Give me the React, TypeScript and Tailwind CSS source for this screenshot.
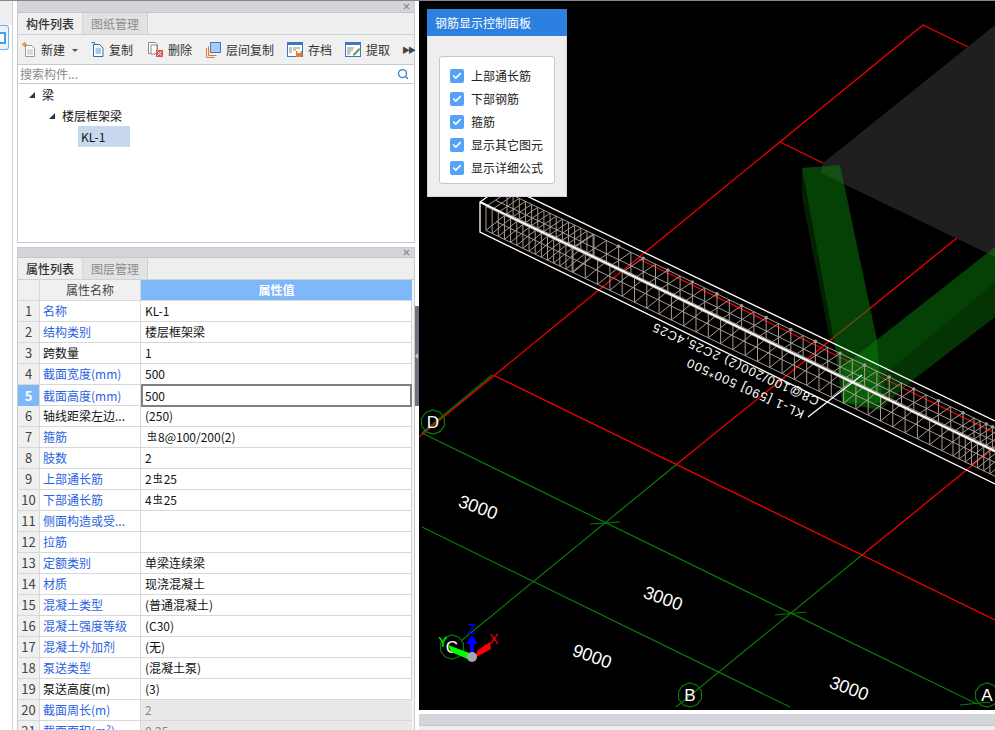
import React from "react";
import { Check, Search, X } from "lucide-react";

type Row = { name: string; value?: React.ReactNode; black?: boolean; grey?: boolean };

// small raised rebar-grade mark used in the rebar values
const Grade = () => <span className="text-[10px] relative top-[-2px] mx-[1px]">虫</span>;

const rows: Row[] = [
    { name: "名称", value: "KL-1" },
    { name: "结构类别", value: "楼层框架梁" },
    { name: "跨数量", value: "1", black: true },
    { name: "截面宽度(mm)", value: "500" },
    { name: "截面高度(mm)", value: "500" },
    { name: "轴线距梁左边...", value: "(250)", black: true },
    { name: "箍筋", value: <><span className="ml-[1px]" /><Grade />8@100/200(2)</> },
    { name: "肢数", value: "2" },
    { name: "上部通长筋", value: <>2<Grade />25</> },
    { name: "下部通长筋", value: <>4<Grade />25</> },
    { name: "侧面构造或受..." },
    { name: "拉筋" },
    { name: "定额类别", value: "单梁连续梁" },
    { name: "材质", value: "现浇混凝土" },
    { name: "混凝土类型", value: "(普通混凝土)" },
    { name: "混凝土强度等级", value: "(C30)" },
    { name: "混凝土外加剂", value: "(无)" },
    { name: "泵送类型", value: "(混凝土泵)" },
    { name: "泵送高度(m)", value: "(3)", black: true },
    { name: "截面周长(m)", value: "2", grey: true },
    { name: "截面面积(m²)", value: "0.25", grey: true },
];

const NewIcon = () => (
    <svg width="14" height="16" viewBox="0 0 14 16">
        <path d="M3.5 3.5h6l3 3v8h-9z" fill="#fff" stroke="#9a9a9a" />
        <path d="M5 8h6M5 10h6M5 12h6" stroke="#b5b5b5" />
        <path d="M2.5 0v5M0 2.5h5M.8.8l3.4 3.4M4.2.8L.8 4.2" stroke="#f0932b" strokeWidth="1" />
    </svg>
);
const CopyIcon = () => (
    <svg width="13" height="15" viewBox="0 0 13 15">
        <path d="M.5.5h3v2" fill="none" stroke="#2f6fb5" />
        <path d="M2.5 2.5h6l3.5 3.5v8.500h-9.500z" fill="#fff" stroke="#2f6fb5" />
        <path d="M4.500 7h5.500M4.500 9h5.500M4.500 11h5.500" stroke="#5a8fc8" />
    </svg>
);
const DeleteIcon = () => (
    <svg width="15" height="15" viewBox="0 0 15 15">
        <path d="M.5.5h7l2 2v9h-9z" fill="#fff" stroke="#8a8a8a" />
        <path d="M3 3h6v9h-6z" fill="#fff" stroke="#8a8a8a" />
        <rect x="8" y="8" width="7" height="7" fill="#d9534f" />
        <path d="M9.500 9.500l4 4M13.500 9.500l-4 4" stroke="#fff" />
    </svg>
);
const FloorCopyIcon = () => (
    <svg width="15" height="16" viewBox="0 0 15 16">
        <path d="M.5 6v9.500h8M2.500 4.500v9h8" fill="none" stroke="#e8742a" />
        <rect x="4.500" y=".5" width="10" height="10" fill="#a9cdf2" stroke="#2f7fd0" />
    </svg>
);
const SaveIcon = () => (
    <svg width="16" height="15" viewBox="0 0 16 15">
        <rect x=".5" y=".5" width="15" height="14" fill="#fff" stroke="#3b78bd" />
        <rect x="0" y="0" width="16" height="3" fill="#3b78bd" />
        <path d="M2 6h3M2 8h3M2 10h3M6 6h7M6 8h3" stroke="#8a8a8a" />
        <rect x="9" y="9" width="6" height="6" fill="#ec7a2c" />
        <rect x="10.500" y="9" width="3" height="2" fill="#fff" />
    </svg>
);
const ExtractIcon = () => (
    <svg width="16" height="15" viewBox="0 0 16 15">
        <rect x=".5" y=".5" width="15" height="14" fill="#fff" stroke="#3b78bd" />
        <rect x="0" y="0" width="16" height="3" fill="#3b78bd" />
        <path d="M2 6h7M2 8h6M2 10h4M2 12h3" stroke="#8a8a8a" />
        <path d="M8 12l6-6 1.500 1.500-6 6H8z" fill="#6a9a5a" />
    </svg>
);

const tools = [
    { label: "复制", icon: <CopyIcon />, w: "w-[57px]" },
    { label: "删除", icon: <DeleteIcon />, w: "w-[58px]" },
    { label: "层间复制", icon: <FloorCopyIcon />, w: "w-[81px]" },
    { label: "存档", icon: <SaveIcon />, w: "w-[58px]" },
    { label: "提取", icon: <ExtractIcon />, w: "w-[58px]" },
];

const PanelTitle = () => (
    <div className="h-[11px] bg-[#d4d5da] border-b border-[#c4c6cc] flex items-center justify-end pr-[3px] box-content">
        <X className="w-[9px] h-[9px] text-[#8a8a8a]" strokeWidth={3} />
    </div>
);

const Tabs = ({ active, other }: { active: string; other: string }) => (
    <div className="h-[22px] flex bg-[#eeeeee] border-b border-[#cfd1d6] shrink-0 text-[12px]">
        <div className="w-[65px] pl-[8px] flex items-center font-medium text-[#333] border-r border-[#d6d6d6]">{active}</div>
        <div className="w-[65px] pl-[8px] flex items-center bg-[#e2e2e2] text-[#8c8c8c] border-r border-[#d0d0d0]">{other}</div>
    </div>
);

const Triangle = () => (
    <svg width="6" height="6" viewBox="0 0 6 6" className="shrink-0">
        <path d="M6 0v6H0z" fill="#333" />
    </svg>
);

const Caret = ({ className }: { className: string }) => <span className={className} />;

// ---- 3D scene -----------------------------------------------------------

const slope = 0.483;
const beamAt = (x: number): [number, number] => [x, 202 + (x - 480) * slope];

function stirrupPositions() {
    const xs: number[] = [];
    for (let x = 483; x < 570; x += 6.15) xs.push(x);
    for (let x = 570; x < 950; x += 12.3) xs.push(x);
    for (let x = 950; x < 1000; x += 6.15) xs.push(x);
    return xs;
}

function Rebar() {
    const xs = stirrupPositions();
    const offs: [number, number][] = [
        [3, 3],
        [3, 27],
        [24, 10],
        [24, -11],
        [13, 18],
        [13, -3],
    ];
    return (
        <g stroke="#a89a90" strokeWidth="1" fill="none">
            {offs.map(([dx, dy], i) => {
                const a = beamAt(483);
                const b = beamAt(1000);
                return <line key={i} x1={a[0] + dx} y1={a[1] + dy} x2={b[0] + dx} y2={b[1] + dy} />;
            })}
            {xs.map((x, i) => {
                const [px, py] = beamAt(x);
                return (
                    <path
                        key={i}
                        d={`M${px + 24} ${py - 11}V${py + 10}L${px + 3} ${py + 27}V${py + 3}Z`}
                    />
                );
            })}
            {xs
                .filter((x) => x > 570 && Math.round((x - 570) / 12.3) % 2 === 0)
                .map((x, i) => {
                    const [px, py] = beamAt(x);
                    return <circle key={i} cx={px + 24} cy={py - 11} r="1.800" fill="#a89a90" stroke="none" />;
                })}
        </g>
    );
}

function AxisBubble({ cx, cy, label }: { cx: number; cy: number; label: string }) {
    const pts = Array.from({ length: 10 }, (_, i) => {
        const a = (Math.PI * 2 * i) / 10 + 0.3;
        return `${cx + Math.cos(a) * 12},${cy + Math.sin(a) * 12}`;
    }).join(" ");
    return (
        <g>
            <polygon points={pts} fill="none" stroke="#0a7a0a" strokeWidth="1.200" />
            <text x={cx} y={cy + 6} textAnchor="middle" fill="#fff" fontSize="17" fontFamily="'Liberation Sans', sans-serif">
                {label}
            </text>
        </g>
    );
}

const dims = [
    { x: 476, y: 507, t: "3000" },
    { x: 661, y: 598, t: "3000" },
    { x: 590, y: 656, t: "9000" },
    { x: 847, y: 688, t: "3000" },
];

function Scene() {
    return (
        <svg viewBox="419 1 576 709" className="block w-[576px] h-[709px]">
            <rect x="419" y="1" width="576" height="709" fill="#000" />

            {/* axis lines */}
            <g stroke="#f00000" strokeWidth="1.300" fill="none">
                <path d="M968 47L923 25L419 437" />
                <path d="M780 142L823 163" />
                <path d="M637 258L995 433" />
                <path d="M493 375L995 620" />
                <path d="M957 238L677 464" />
                <path d="M995 447L862 555" />
            </g>
            <g stroke="#0a7a0a" strokeWidth="1.200" fill="none">
                <path d="M422 433L492 375" />
                <path d="M422 433L977 704" />
                <path d="M422 527L790 707" />
                <path d="M462 640L677 464" />
                <path d="M676 707L862 555" />
                <path d="M590 524L620 522M775 615L806 612M960 705L990 702" />
            </g>

            {/* slab and green members */}
            <polygon points="995,25 823,163 821,173 995,257" fill="#1f1f1f" />
            <polygon points="802,168 802,197 830,340 835,347" fill="#0a800a" fillOpacity="0.25" />
            <polygon points="802,168 840,165 877,340 882,403 842,403 835,347" fill="#0a800a" fillOpacity="0.5" />
            <polygon points="842,368 860,353 995,247 995,283 887,373 880,410 843,403" fill="#0a800a" fillOpacity="0.5" />
            <polygon points="995,283 995,317 913,380 880,410 887,373" fill="#0a800a" fillOpacity="0.4" />

            <Rebar />

            {/* beam outline */}
            <g stroke="#fff" fill="none" strokeWidth="1.300">
                <path d="M504 185L480 202V232L995 484" />
                <path d="M504 185L995 421" />
                <path d="M480 202L995 451" strokeWidth="2" />
                <path d="M808 417L862 375" />
            </g>

            {/* beam label, drawn upside down like the CAD view */}
            <g fill="#fff" fontSize="12.500" fontFamily="'Liberation Sans', sans-serif">
                <text transform="translate(805 411) rotate(204.500)" textLength="127">KL-1 [590] 500*500</text>
                <text transform="translate(820 398) rotate(204.500)" textLength="181">C8@100/200(2) 2C25,4C25</text>
            </g>

            <AxisBubble cx={433} cy={422} label="D" />
            <AxisBubble cx={452} cy={647} label="C" />
            <AxisBubble cx={690} cy={695} label="B" />
            <AxisBubble cx={987} cy={695} label="A" />

            {dims.map((d, i) => (
                <text
                    key={i}
                    transform={`translate(${d.x} ${d.y + 6}) rotate(20)`}
                    textAnchor="middle"
                    fill="#fff"
                    fontSize="18"
                    fontFamily="'Liberation Sans', sans-serif"
                >
                    {d.t}
                </text>
            ))}

            {/* view gizmo */}
            <path d="M472 654L448 645L451 652L470 660Z" fill="#00ff00" />
            <path d="M474 658L478 650L490 642L491 649L482 654Z" fill="#ff0000" />
            <path d="M470 655V644H466L472 635L478 644H474V655Z" fill="#0000ff" />
            <circle cx="472" cy="657" r="5" fill="#a8a8a8" />
            <g fontSize="14" fontFamily="'Liberation Sans', sans-serif">
                <text x="472" y="634" textAnchor="middle" fill="#0000ff">Z</text>
                <text x="494" y="644" textAnchor="middle" fill="#ff0000">X</text>
                <text x="443" y="647" textAnchor="middle" fill="#00ff00">Y</text>
            </g>
        </svg>
    );
}

const layers = ["上部通长筋", "下部钢筋", "箍筋", "显示其它图元", "显示详细公式"];

export default function App() {
    return (
        <div className="w-[995px] h-[730px] overflow-hidden flex flex-col bg-white text-[12px] text-black font-['Noto_Sans_CJK_SC','Noto_Sans',sans-serif]">
            <div className="h-px bg-[#83878d] shrink-0" />
            <div className="flex flex-1 min-h-0">
                {/* left rail */}
                <div className="w-[13px] shrink-0 border-r border-[#cfd0d4] flex flex-col">
                    <div className="h-[24px] bg-[#eeeeee]" />
                    <div className="w-[9px] h-[25px] border border-l-0 border-[#6fb0ee] rounded-r-[3px] bg-[#e9f2fb] flex items-center">
                        <div className="w-[6px] h-[12px] border-2 border-l-0 border-[#4a9ae8] bg-white" />
                    </div>
                </div>

                {/* panels */}
                <div className="w-[398px] ml-[4px] shrink-0 flex flex-col">
                    <div className="h-[242px] border border-t-0 border-[#c8cad0] flex flex-col shrink-0">
                        <PanelTitle />
                        <Tabs active="构件列表" other="图纸管理" />
                        <div className="h-[30px] shrink-0 bg-[#f0f0f0] border-b border-[#c8cad0] flex items-center pl-[4px] text-[#333]">
                            <div className="w-[69px] flex items-center">
                                <NewIcon />
                                <span className="ml-[5px]">新建</span>
                                <Caret className="ml-[7px] mt-[2px] border-x-[3px] border-t-[3px] border-x-transparent border-t-[#555]" />
                            </div>
                            {tools.map((t) => (
                                <div key={t.label} className={`${t.w} flex items-center gap-[5px] shrink-0`}>
                                    {t.icon}
                                    <span>{t.label}</span>
                                </div>
                            ))}
                            <span className="ml-[-1px] text-[8px] tracking-[-2px] text-[#444]">▶▶</span>
                        </div>
                        <div className="h-[19px] shrink-0 border-b border-[#c8cad0] flex items-center justify-between pl-[2px] pr-[5px] text-[#8a8a8a]">
                            <span>搜索构件...</span>
                            <Search className="w-[12px] h-[12px] text-[#2f7fc8]" strokeWidth={2.5} />
                        </div>
                        <div className="flex-1 bg-white text-[#111]">
                            <div className="h-[21px] pl-[11px] flex items-center gap-[7px]">
                                <Triangle />
                                <span>梁</span>
                            </div>
                            <div className="h-[21px] pl-[31px] flex items-center gap-[7px]">
                                <Triangle />
                                <span>楼层框架梁</span>
                            </div>
                            <div className="h-[21px] ml-[60px] w-[52px] pl-[3px] flex items-center bg-[#c8d8ef]">KL-1</div>
                        </div>
                    </div>

                    <div className="mt-[4px] flex-1 min-h-0 border border-b-0 border-[#c8cad0] flex flex-col overflow-hidden bg-[#f4f4f4]">
                        <PanelTitle />
                        <Tabs active="属性列表" other="图层管理" />
                        <div className="w-[394px] border-r border-[#d4d4d4]">
                            <div className="grid grid-cols-[22px_101px_271px] h-[21px] border-b border-[#d8d8d8]">
                                <div className="bg-[#f0f0f0] border-r border-[#d8d8d8]" />
                                <div className="bg-[#f0f0f0] border-r border-[#d8d8d8] flex items-center justify-center text-[#444]">属性名称</div>
                                <div className="bg-[#7fb8f8] flex items-center justify-center text-white font-bold">属性值</div>
                            </div>
                            {rows.map((r, i) => {
                                const selected = i === 4;
                                return (
                                    <div key={r.name} className="grid grid-cols-[22px_101px_271px] h-[21px] border-b border-[#d8d8d8] bg-white">
                                        <div
                                            className={
                                                selected
                                                    ? "bg-[#7fb8f8] border-r border-[#d8d8d8] flex items-center justify-center text-[13px] font-bold text-white"
                                                    : "bg-[#f0f0f0] border-r border-[#d8d8d8] flex items-center justify-center text-[13px] text-[#444]"
                                            }
                                        >
                                            {i + 1}
                                        </div>
                                        <div className={r.black ? "border-r border-[#d8d8d8] flex items-center pl-[3px] text-[#111] whitespace-nowrap overflow-hidden" : "border-r border-[#d8d8d8] flex items-center pl-[3px] text-[#2a62e0] whitespace-nowrap overflow-hidden"}>
                                            {r.name}
                                        </div>
                                        {selected ? (
                                            <div className="relative z-10 -my-px border-2 border-[#808080] flex items-center pl-[2px] h-[23px] text-[#111]">{r.value}</div>
                                        ) : (
                                            <div className={r.grey ? "flex items-center pl-[4px] bg-[#e9e9e9] text-[#888]" : "flex items-center pl-[4px] text-[#111]"}>
                                                {r.value}
                                            </div>
                                        )}
                                    </div>
                                );
                            })}
                        </div>
                    </div>
                </div>

                {/* splitter */}
                <div className="w-[4px] shrink-0 pt-[305px]">
                    <div className="h-[100px] bg-[#6d747d] flex items-center">
                        <div className="border-y-[3px] border-r-[3px] border-y-transparent border-r-[#c8ccd0]" />
                    </div>
                </div>

                {/* 3D viewport */}
                <div className="flex-1 min-w-0 flex flex-col">
                    <div className="relative h-[709px] shrink-0">
                        <Scene />
                        <div className="absolute left-[8px] top-[8px] w-[140px] h-[188px] bg-[#eeeeee] border border-t-0 border-[#d3d6e2]">
                            <div className="-mx-px h-[27px] bg-[#2e80e0] pl-[8px] flex items-center text-white">钢筋显示控制面板</div>
                            <div className="mt-[20px] ml-[11px] w-[116px] h-[128px] pt-[7px] bg-white border border-[#c8c8c8] rounded-[3px]">
                                {layers.map((l) => (
                                    <div key={l} className="h-[23px] flex items-center pl-[10px] gap-[7px] text-[#222]">
                                        <span className="w-[14px] h-[14px] rounded-[2px] bg-[#55a2f8] flex items-center justify-center">
                                            <Check className="w-[10px] h-[10px] text-white" strokeWidth={4} />
                                        </span>
                                        {l}
                                    </div>
                                ))}
                            </div>
                        </div>
                    </div>
                    <div className="h-[4px] shrink-0 bg-white" />
                    <div className="h-[12px] shrink-0 bg-[#d4d5da] border-b border-[#c4c6cc]" />
                    <div className="flex-1 bg-[#eeeeee]" />
                </div>
            </div>
        </div>
    );
}
